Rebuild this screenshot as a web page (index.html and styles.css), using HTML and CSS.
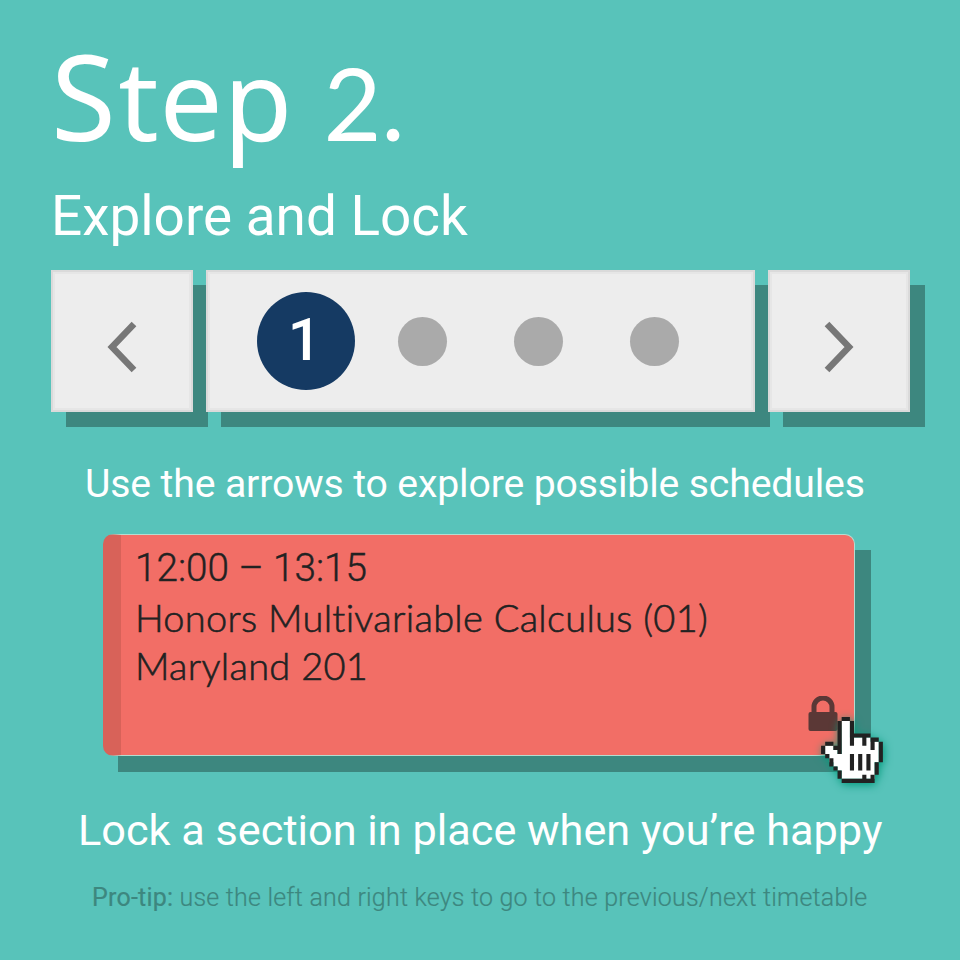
FILE: index.html
```
<!DOCTYPE html>
<html lang="en">
<head>
<meta charset="utf-8">
<title>Step 2. Explore and Lock</title>
<link rel="stylesheet" href="styles.css">
</head>
<body>
<main class="page">
  <h1 class="title"><span class="title-word"><span class="title-initial">S</span>tep</span><span class="title-number">2.</span></h1>
  <h2 class="subtitle">Explore and Lock</h2>
  <nav class="pager">
    <div class="tile tile-arrow">
      <svg class="arrow" width="30" height="52" viewBox="0 0 30 52"><path d="M27 3 5 26 27 49"/></svg>
    </div>
    <div class="tile tile-pages">
      <span class="page-current">1</span>
      <span class="dot"></span>
      <span class="dot"></span>
      <span class="dot"></span>
    </div>
    <div class="tile tile-arrow">
      <svg class="arrow" width="30" height="52" viewBox="0 0 30 52"><path d="M3 3 25 26 3 49"/></svg>
    </div>
  </nav>
  <p class="hint">Use the arrows to explore possible schedules</p>
  <section class="course">
    <p class="course-time">12:00 – 13:15</p>
    <p class="course-name">Honors Multivariable Calculus (01)</p>
    <p class="course-place">Maryland 201</p>
    <svg class="lock" width="30" height="36" viewBox="0 0 30 36"><path class="shackle" d="M6 18V11a9 9 0 0 1 18 0v7"/><rect x="0.5" y="16" width="29" height="19" rx="2"/></svg>
    <svg class="cursor" width="64" height="68" viewBox="0 0 15.5 16.5">
      <path class="cursor-fill" d="M5 1H7V5H12V6H14V11H13V15H5V13H4V12H3V11H2V9H1V7H3V8H4V9H5Z"/>
      <path class="cursor-line" d="M5 0H7V1H5ZM4 1H5V9H4ZM7 1H8V7H7ZM8 4H12V5H8ZM10 5H11V7H10ZM12 5H14V6H12ZM12 6H13V8H12ZM14 6H15V11H14ZM13 11H14V14H13ZM12 14H13V16H12ZM5 15H13V16H5ZM4 13H5V15H4ZM3 12H4V13H3ZM2 10H3V12H2ZM1 9H2V10H1ZM0 7H1V9H0ZM1 6H3V7H1ZM3 7H4V8H3ZM7 9H8V13H7ZM9 9H10V13H9ZM11 9H12V13H11ZM10 14H11V15H10Z"/>
    </svg>
  </section>
  <p class="lock-hint">Lock a section in place when you’re happy</p>
  <p class="tip"><b>Pro-tip:</b> use the left and right keys to go to the previous/next timetable</p>
</main>
</body>
</html>
```
FILE: styles.css
```
* { box-sizing: border-box; margin: 0; padding: 0; }
body { background: #58c3ba; }
.page {
  width: 960px;
  height: 960px;
  overflow: hidden;
  padding: 26px 50px 0 51px;
  background: #58c3ba;
  color: #fff;
  font-family: Roboto, sans-serif;
  white-space: nowrap;
}
.title {
  display: flex;
  align-items: baseline;
  height: 154px;
  line-height: 140px;
  font-weight: 400;
}
.title-word {
  font-family: "Noto Sans", sans-serif;
  font-size: 112px;
  letter-spacing: 0.9px;
}
.title-initial { font-size: 118px; letter-spacing: 2.4px; }
.title-number { margin-left: 30px; font-family: Lato, sans-serif; font-size: 100px; }
.subtitle { height: 90px; line-height: 72px; font-size: 54.9px; font-weight: 400; }
.pager { display: flex; gap: 13px; height: 142px; }
.tile {
  display: flex;
  align-items: center;
  height: 142px;
  border: 2px solid #dadada;
  background: #ededed;
  box-shadow: inset 0 0 0 2px #e6e6e6, 15px 15px 0 #3d877f;
}
.tile-arrow { width: 142px; justify-content: center; padding-top: 11px; }
.tile-pages { width: 549px; padding-left: 49px; }
.arrow { fill: none; stroke: #777; stroke-width: 6.5; }
.page-current {
  width: 98px;
  height: 98px;
  margin-right: 43px;
  border-radius: 50%;
  background: #153a63;
  font-size: 59px;
  font-weight: 500;
  line-height: 96px;
  text-align: center;
  text-indent: -3px;
}
.dot { width: 49px; height: 49px; margin-right: 67.2px; border-radius: 50%; background: #aaa; }
.hint { margin-top: 48px; height: 48px; line-height: 48px; font-size: 39.2px; letter-spacing: -0.14px; padding-left: 34px; }
.course {
  position: relative;
  z-index: 0;
  width: 752px;
  height: 222px;
  margin: 26px 0 0 52px;
  padding: 9px 0 0 32px;
  color: #222;
  font-family: Lato, sans-serif;
  font-variant-ligatures: none;
}
.course::before,
.course::after {
  content: "";
  position: absolute;
  z-index: -1;
  inset: 0;
  border: 1px solid #b5ddd0;
  border-left: 18px solid #d86259;
  border-radius: 10px;
  background: #f26e66;
}
.course::before {
  inset: 16px -16px -16px 15px;
  border: 0;
  border-radius: 0;
  background: #3d877f;
}
.course-time { height: 50px; line-height: 50px; font-family: Roboto, sans-serif; font-size: 38.7px; font-weight: 300; -webkit-text-stroke: 0.4px #222; }
.course-name, .course-place {
  height: 48px;
  line-height: 48px;
  font-size: 38px;
  font-weight: 300;
  letter-spacing: 0.28px;
  -webkit-text-stroke: 0.6px #222;
}
.lock { position: absolute; left: 705px; top: 162px; fill: #5b3836; }
.shackle { fill: none; stroke: #5b3836; stroke-width: 5; }
.cursor { position: absolute; left: 718px; top: 183px; overflow: visible; filter: drop-shadow(1px 2px 4px #00997a); }
.cursor-fill { fill: #fff; }
.cursor-line { fill: #222; }
.lock-hint { margin-top: 47px; height: 55px; line-height: 56px; font-size: 43.25px; padding-left: 27px; }
.tip { margin-top: 23px; height: 32px; line-height: 33px; padding-left: 41px; color: #3d877f; font-size: 25px; font-weight: 300; letter-spacing: 0.21px; -webkit-text-stroke: 0.2px #3d877f; }
.tip b { font-weight: 400; }
```
